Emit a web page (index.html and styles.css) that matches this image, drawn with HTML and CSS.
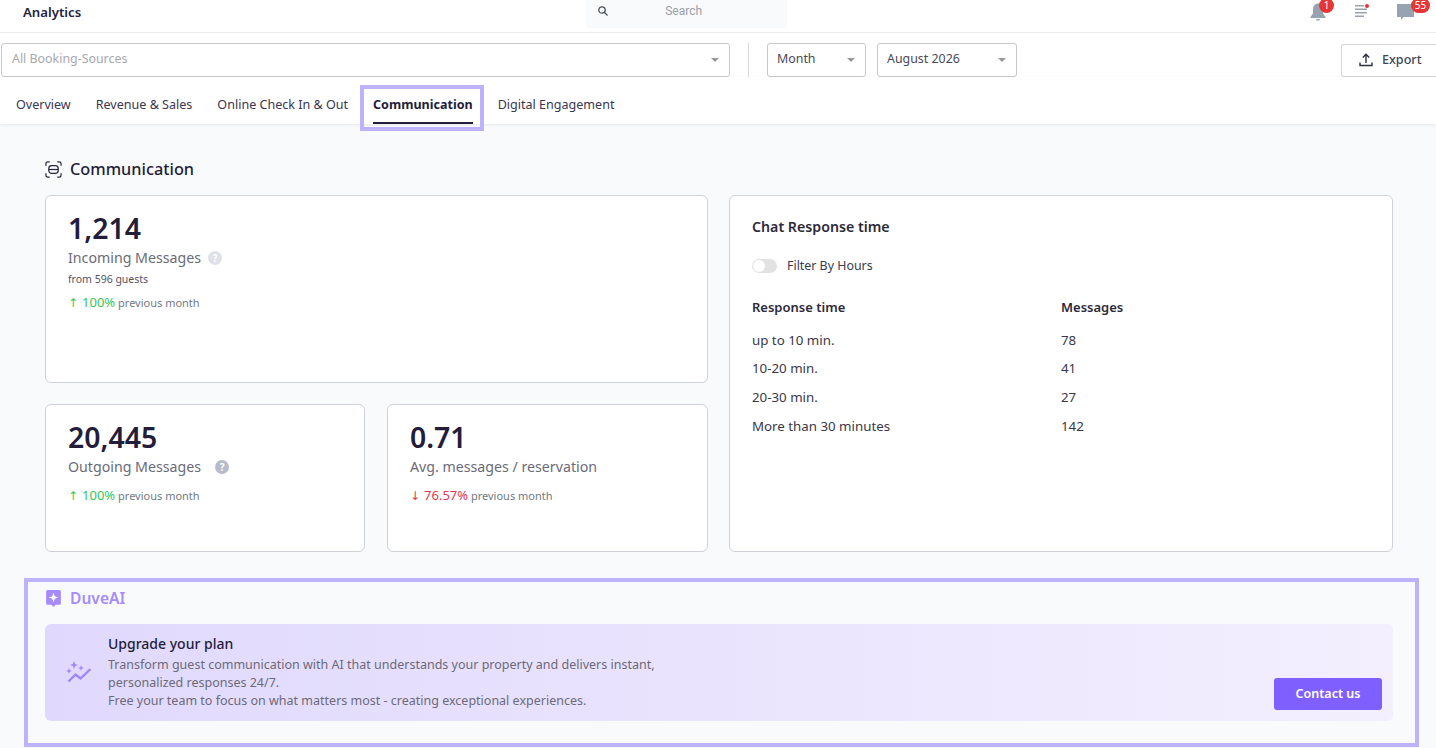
FILE: index.html
```html
<!DOCTYPE html>
<html lang="en">
<head>
  <meta charset="UTF-8" />
  <meta name="viewport" content="width=device-width, initial-scale=1.0"/>
  <title>Analytics</title>
  <link rel="stylesheet" href="styles.css">
</head>
<body>
  <header class="topbar">
    <div class="page-title">Analytics</div>
    <div class="search">
      <svg class="search-icon" width="12" height="12" viewBox="0 0 12 12" fill="none" stroke="#4a5160" stroke-width="1.3"><circle cx="5" cy="5" r="3.2"/><path d="M7.5 7.5l3 3"/></svg>
      <span>Search</span>
    </div>
    <div class="top-icons">
      <div class="top-icon">
        <svg width="18" height="20" viewBox="0 0 18 20" fill="#97a3b0"><path d="M9 1.500c-3.200 0-5 2.500-5 5.500v4.500L1.500 15v1h15v-1L14 11.500V7c0-3-1.800-5.500-5-5.500z"/><rect x="7" y="17" width="4" height="1.600" rx=".8"/></svg>
        <span class="badge">1</span>
      </div>
      <div class="top-icon">
        <svg width="14" height="16" viewBox="0 0 14 16" fill="#97a3b0"><rect y="3" width="9" height="1.500"/><rect y="6.500" width="12" height="1.500"/><rect y="10" width="12" height="1.500"/><rect y="13.500" width="9" height="1.500"/></svg>
        <span class="dot"></span>
      </div>
      <div class="top-icon">
        <svg width="18" height="19" viewBox="0 0 18 19" fill="#97a3b0"><path d="M0 2h17v13H6.500L4 18v-3H0z"/></svg>
        <span class="badge badge-wide">55</span>
      </div>
    </div>
  </header>

  <div class="filters">
    <div class="select select-sources"><span class="placeholder">All Booking-Sources</span><i class="caret"></i></div>
    <div class="divider"></div>
    <div class="select select-month"><span>Month</span><i class="caret"></i></div>
    <div class="select select-date"><span>August 2026</span><i class="caret"></i></div>
    <button class="export">
      <svg width="14" height="14" viewBox="0 0 14 14" fill="none" stroke="#2c3242" stroke-width="1.400"><path d="M7 10V1.500M3.800 4.500L7 1.300l3.200 3.200M1 9.500v3h12v-3"/></svg>
      <span>Export</span>
    </button>
  </div>

  <nav class="tabs">
    <a class="tab">Overview</a>
    <a class="tab">Revenue &amp; Sales</a>
    <a class="tab">Online Check In &amp; Out</a>
    <a class="tab active">Communication</a>
    <a class="tab">Digital Engagement</a>
  </nav>

  <main class="content">
    <h2 class="section-title">
      <svg width="17" height="17" viewBox="0 0 18 18" fill="none" stroke="#2b2740" stroke-width="1.300"><path d="M1 5V3a2 2 0 0 1 2-2h2M13 1h2a2 2 0 0 1 2 2v2M17 13v2a2 2 0 0 1-2 2h-2M5 17H3a2 2 0 0 1-2-2v-2"/><rect x="4" y="5" width="10" height="8" rx="3"/><path d="M4 9h10"/></svg>
      Communication
    </h2>

    <div class="grid">
      <div class="card card-incoming">
        <div class="big-num">1,214</div>
        <div class="stat-label">Incoming Messages <span class="help">?</span></div>
        <div class="from">from 596 guests</div>
        <div class="trend"><span class="up"><i class="arrow">↑</i>100%</span> previous month</div>
      </div>
      <div class="card card-outgoing">
        <div class="big-num">20,445</div>
        <div class="stat-label">Outgoing Messages <span class="help help-dark">?</span></div>
        <div class="trend"><span class="up"><i class="arrow">↑</i>100%</span> previous month</div>
      </div>
      <div class="card card-avg">
        <div class="big-num">0.71</div>
        <div class="stat-label">Avg. messages / reservation</div>
        <div class="trend"><span class="down"><i class="arrow">↓</i>76.57%</span> previous month</div>
      </div>
      <div class="card card-chat">
        <h3 class="chat-title">Chat Response time</h3>
        <div class="filter-hours"><span class="toggle"></span>Filter By Hours</div>
        <div class="resp-table">
          <div class="resp-head">Response time</div><div class="resp-head">Messages</div>
          <div>up to 10 min.</div><div>78</div>
          <div>10-20 min.</div><div>41</div>
          <div>20-30 min.</div><div>27</div>
          <div>More than 30 minutes</div><div>142</div>
        </div>
      </div>
    </div>
  </main>

  <section class="duve">
    <div class="duve-title">
      <svg width="17" height="19" viewBox="0 0 16 18"><path fill="#a78bfa" d="M2.500 1h11A1.500 1.500 0 0 1 15 2.500v11a1.500 1.500 0 0 1-1.500 1.500H10l-2 2-2-2H2.500A1.500 1.500 0 0 1 1 13.500v-11A1.500 1.500 0 0 1 2.500 1z"/><path fill="#fff" d="M8 3.500l1.200 3.300 3.300 1.200-3.300 1.200L8 12.500 6.800 9.200 3.500 8l3.300-1.200z"/></svg>
      DuveAI
    </div>
    <div class="banner">
      <svg class="banner-icon" width="26" height="22" viewBox="0 0 26 22" fill="#9f85f7"><path d="M8 0l1.100 2.900 2.900 1.100-2.900 1.100L8 8 6.900 5.100 4 4l2.900-1.100z"/><path d="M3 7l.8 2.200L6 10l-2.200.8L3 13l-.8-2.200L0 10l2.200-.8z"/><path d="M15 4l.8 2.200 2.200.8-2.200.8L15 10l-.8-2.200L12 7l2.200-.8z"/><path d="M2.500 20.500l7-7 5 4 10-9.500" fill="none" stroke="#9f85f7" stroke-width="2.400"/></svg>
      <div class="banner-text">
        <h4>Upgrade your plan</h4>
        <p>Transform guest communication with AI that understands your property and delivers instant,<br>personalized responses 24/7.<br>Free your team to focus on what matters most - creating exceptional experiences.</p>
      </div>
      <button class="contact"><span>Contact us</span></button>
    </div>
  </section>
</body>
</html>
```

FILE: styles.css
```css
* {
  box-sizing: border-box;
}
html, body {
  height: 748px;
  overflow: hidden;
}
body {
  margin: 0;
  font-family: "Noto Sans", "Open Sans", sans-serif;
  font-size: 13px;
  color: #231d3a;
  background-color: #f9fafc;
}
.topbar {
  height: 33px;
  background-color: #fff;
  border-bottom: 1px solid #ececec;
  display: flex;
  align-items: flex-start;
  position: relative;
}
.page-title {
  margin-left: 23px;
  margin-top: 3px;
  font-size: 13.200px;
  font-weight: 600;
  line-height: 18px;
  color: #1f2340;
}
.search {
  margin-left: 505px;
  width: 201px;
  height: 28px;
  background-color: #f9fafc;
  border-radius: 0 0 4px 4px;
  display: flex;
  align-items: center;
  font-family: Roboto, sans-serif;
  font-size: 12px;
  color: #9aa0a8;
  padding-bottom: 6px;
}
.search-icon {
  margin-left: 11px;
  margin-right: 56px;
}
.top-icons {
  margin-left: auto;
  margin-right: 21px;
  display: flex;
  gap: 28px;
  padding-top: 2px;
  align-items: flex-start;
}
.top-icon {
  position: relative;
  display: flex;
}
.badge {
  position: absolute;
  top: -4px;
  left: 10px;
  width: 15px;
  height: 15px;
  border-radius: 50%;
  background-color: #e53535;
  color: #fff;
  font-size: 10px;
  line-height: 14px;
  text-align: center;
}
.badge-wide {
  left: 14px;
  width: 19px;
  height: 15px;
  border-radius: 8px;
}
.dot {
  position: absolute;
  top: 2px;
  left: 10px;
  width: 4px;
  height: 4px;
  border-radius: 50%;
  background-color: #e53535;
}
.filters {
  background-color: #fff;
  display: flex;
  align-items: center;
  padding: 10px 0 0 1px;
  height: 44px;
}
.select {
  height: 34px;
  border: 1px solid #c9c9c9;
  border-radius: 3px;
  background-color: #fff;
  display: flex;
  align-items: center;
  justify-content: space-between;
  padding: 0 10px 0 9px;
  font-size: 12.400px;
  color: #4a4a55;
}
.select span {
  padding-bottom: 4px;
}
.placeholder {
  color: #a8a8ad;
}
.select-sources {
  width: 729px;
  padding-left: 10px;
}
.select-month {
  width: 99px;
  margin-right: 11px;
}
.select-date {
  width: 140px;
}
.divider {
  width: 1px;
  height: 34px;
  background-color: #d8d8d8;
  margin: 0 18px;
}
.caret {
  width: 0;
  height: 0;
  border-left: 4px solid transparent;
  border-right: 4px solid transparent;
  border-top: 4px solid #999;
}
.export {
  margin-left: auto;
  width: 95px;
  height: 33px;
  border: 1px solid #d5d5d5;
  border-right: none;
  border-radius: 3px 0 0 3px;
  background-color: #fff;
  font-family: inherit;
  font-size: 12.600px;
  font-weight: 500;
  color: #3c4658;
  display: flex;
  align-items: center;
  gap: 9px;
  padding: 0 0 0 17px;
}
.export span {
  padding-bottom: 2px;
}
.tabs {
  background-color: #fff;
  height: 47px;
  display: flex;
  gap: 25px;
  padding-left: 16px;
  box-shadow: 0 1px 3px rgba(0, 0, 0, 0.08);
  position: relative;
  font-size: 12.550px;
}
.tab {
  height: 47px;
  padding-top: 18px;
  line-height: 20px;
  color: #3a3650;
  position: relative;
}
.tab.active {
  font-weight: 700;
  color: #231d3a;
  border-bottom: 2px solid #231d3a;
}
.tab.active::after {
  content: "";
  position: absolute;
  left: -13px;
  right: -11px;
  top: 8px;
  bottom: -9px;
  border: 4px solid #bdb2fb;
}
.content {
  padding: 0 43px 0 45px;
}
.section-title {
  margin: 33px 0 14px;
  height: 24px;
  display: flex;
  align-items: center;
  gap: 8px;
  font-size: 16.300px;
  font-weight: 500;
  line-height: 24px;
}
.grid {
  display: grid;
  grid-template-columns: 320px 321px 664px;
  grid-template-rows: 188px 148px;
  column-gap: 22px;
  row-gap: 21px;
}
.card {
  background-color: #fff;
  border: 1px solid #cfd2d8;
  border-radius: 6px;
  padding: 13px 22px;
}
.card-incoming {
  grid-column: 1 / 3;
}
.card-chat {
  grid-column: 3;
  grid-row: 1 / 3;
  margin-left: -1px;
  margin-right: 1px;
}
.big-num {
  font-size: 28.400px;
  font-weight: 600;
  line-height: 38px;
  margin-bottom: 1px;
}
.stat-label {
  font-size: 14.200px;
  line-height: 20px;
  color: #6b6b78;
  display: flex;
  align-items: center;
  gap: 7px;
}
.help {
  width: 14px;
  height: 14px;
  border-radius: 50%;
  background-color: #dfe1e8;
  color: #fff;
  font-size: 10px;
  font-weight: 700;
  line-height: 14px;
  text-align: center;
}
.help-dark {
  background-color: #b6bccb;
  margin-left: 7px;
}
.from {
  font-size: 10.500px;
  line-height: 16px;
  margin-top: 3px;
  color: #55525f;
}
.trend {
  font-size: 11px;
  line-height: 18px;
  margin-top: 6px;
  color: #717a86;
}
.card-outgoing .trend, .card-avg .trend {
  margin-top: 9px;
}
.up, .down {
  font-size: 13px;
}
.up {
  color: #34c759;
}
.down {
  color: #e0394f;
}
.arrow {
  font-family: "DejaVu Sans", sans-serif;
  font-style: normal;
  font-size: 12px;
  margin-right: 4px;
}
.chat-title {
  margin: 8px 0 0;
  font-size: 14.200px;
  font-weight: 600;
  line-height: 20px;
  color: #2d2a3a;
}
.filter-hours {
  margin-top: 20px;
  font-size: 12.400px;
  line-height: 18px;
  display: flex;
  align-items: center;
  gap: 10px;
  color: #393a4c;
}
.toggle {
  width: 25px;
  height: 14px;
  border-radius: 7px;
  background-color: #e2e2e2;
  position: relative;
}
.toggle::after {
  content: "";
  position: absolute;
  left: 1px;
  top: 1px;
  width: 12px;
  height: 12px;
  border-radius: 50%;
  background-color: #fff;
}
.resp-table {
  margin-top: 22px;
  display: grid;
  grid-template-columns: 309px 1fr;
  grid-auto-rows: 28.600px;
  align-items: center;
  line-height: 18px;
  color: #3a3848;
  font-size: 13.300px;
}
.resp-head {
  font-size: 13px;
  font-weight: 600;
  color: #2d2a3a;
  height: 37px;
  line-height: 18px;
  padding-top: 5px;
}
.duve {
  margin: 26px 17px 0 24px;
  height: 169px;
  border: 4px solid #bdb2fb;
  padding: 0 22px 0 17px;
}
.duve-title {
  display: flex;
  align-items: center;
  gap: 8px;
  height: 24px;
  margin-top: 4px;
  font-size: 15.600px;
  font-weight: 600;
  color: #a78bfa;
}
.banner {
  margin-top: 14px;
  height: 97px;
  border-radius: 6px;
  background: linear-gradient(90deg, #e0d9fd, #f3effe);
  display: flex;
  position: relative;
  padding-left: 21px;
}
.banner-icon {
  margin-top: 37px;
  flex: none;
}
.banner-text {
  margin-left: 16px;
  padding-top: 10px;
  flex: 1;
}
.banner-text h4 {
  margin: 0;
  font-size: 14px;
  font-weight: 500;
  line-height: 20px;
  color: #231d3a;
}
.banner-text p {
  margin: 2px 0 0;
  font-size: 12.500px;
  line-height: 18px;
  color: #6d6a78;
}
.contact {
  align-self: flex-end;
  margin: 0 11px 11px 0;
  width: 108px;
  height: 32px;
  border: none;
  border-radius: 3px;
  background-color: #7f60fe;
  color: #fff;
  font-family: inherit;
  font-size: 12.500px;
  font-weight: 600;
  padding: 0 0 2px;
}
```
